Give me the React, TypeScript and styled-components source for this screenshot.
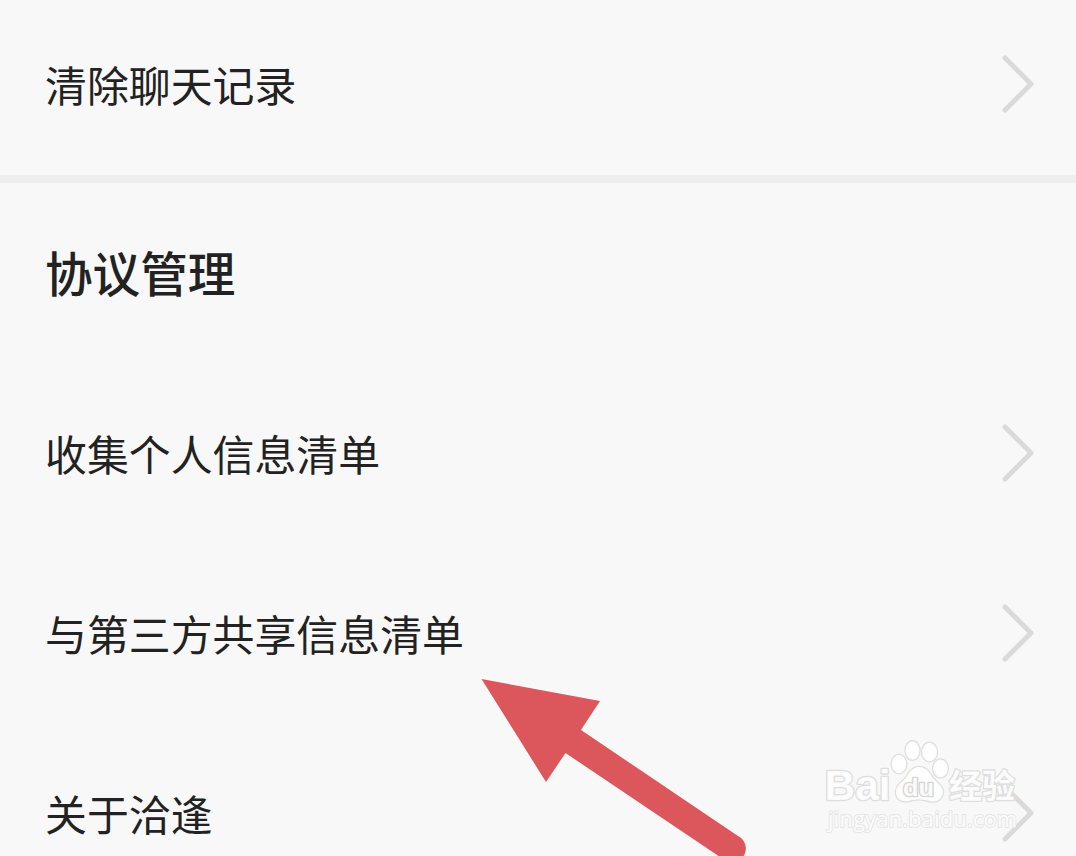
import React from 'react';
import styled, { createGlobalStyle } from 'styled-components';

const GlobalStyle = createGlobalStyle`
  * {
    box-sizing: border-box;
  }

  body {
    margin: 0;
    background: #f8f8f8;
    font-family: 'Noto Sans CJK SC', sans-serif;
  }
`;

const Page = styled.main`
  position: relative;
  display: flex;
  flex-direction: column;
  width: 1076px;
  height: 856px;
  overflow: hidden;
  background: #f8f8f8;
  color: #222;
`;

const Row = styled.div<{ $height?: number }>`
  display: flex;
  flex-shrink: 0;
  align-items: center;
  justify-content: space-between;
  height: ${props => props.$height || 180}px;
  padding: 0 40px 2px 45px;
`;

const FirstRow = styled(Row)`
  padding-bottom: 8px;
`;

const Label = styled.span`
  font-size: 41.9px;
  line-height: 60px;
  white-space: nowrap;
`;

const Divider = styled.div`
  flex-shrink: 0;
  height: 8px;
  background: #eeeeee;
`;

const SectionTitle = styled.h2`
  display: flex;
  flex-shrink: 0;
  align-items: center;
  height: 181px;
  margin: 0;
  padding: 0 45px 3px;
  font-size: 47.6px;
  font-weight: 500;
  line-height: 70px;
`;

const Arrow = styled.svg`
  position: absolute;
  left: 470px;
  top: 670px;
`;

const Watermark = styled.svg`
  position: absolute;
  left: 816px;
  top: 732px;
`;

const Brand = styled.text`
  font-family: 'Liberation Sans', 'Noto Sans CJK SC', sans-serif;
  font-weight: 700;
`;

const Address = styled.text`
  font-family: 'Open Sans', sans-serif;
  font-size: 21.5px;
  font-weight: 400;
`;

function Chevron() {
  return (
    <svg width="36" height="62" viewBox="0 0 36 62" fill="none">
      <path
        d="M5 5L31 31L5 57"
        stroke="#dadada"
        strokeWidth="5"
        strokeLinecap="round"
        strokeLinejoin="round"
      />
    </svg>
  );
}

function BaiduMark() {
  return (
    <Watermark width="216" height="112" viewBox="816 732 216 112">
      <g
        fill="#fff"
        fillOpacity="0.9"
        stroke="#dedede"
        strokeWidth="2.6"
        strokeLinejoin="round"
        paintOrder="stroke"
      >
        <Brand x="824.5" y="800" fontSize="42" textLength="66" lengthAdjust="spacingAndGlyphs">Bai</Brand>
        <ellipse cx="899" cy="764" rx="7.3" ry="9.3" strokeWidth="2.4" />
        <ellipse cx="912.5" cy="750.5" rx="7" ry="9.3" strokeWidth="2.4" />
        <ellipse cx="929.5" cy="752" rx="7.4" ry="9.3" strokeWidth="2.4" />
        <ellipse cx="940.5" cy="768.5" rx="7.4" ry="9" strokeWidth="2.4" />
        <path
          d="M919 767C911 767 909 774 904 780C899 784 896 787 896 792C896 800 902 802 909 801C915 799 923 799 929 801C937 803 943 799 943 791C942 785 937 783 933 778C929 772 927 767 919 767Z"
          strokeWidth="2.4"
        />
        <Brand x="903" y="796" fontSize="23" stroke="#d6d6d6" textLength="31" lengthAdjust="spacingAndGlyphs">du</Brand>
        <Brand x="949" y="798" fontSize="33" textLength="66">经验</Brand>
        <Address x="828" y="827" stroke="#e6e6e6" strokeWidth="2" textLength="189">jingyan.baidu.com</Address>
      </g>
    </Watermark>
  );
}

const AGREEMENTS = ['收集个人信息清单', '与第三方共享信息清单', '关于洽逢'];

function App() {
  return (
    <Page>
      <GlobalStyle />

      <FirstRow $height={175}>
        <Label>清除聊天记录</Label>
        <Chevron />
      </FirstRow>
      <Divider />

      <SectionTitle>协议管理</SectionTitle>
      {AGREEMENTS.map(item => (
        <Row key={item}>
          <Label>{item}</Label>
          <Chevron />
        </Row>
      ))}

      <Arrow width="290" height="186" viewBox="470 670 290 186">
        <path
          d="M481.5 679L600 701L581 730L738 836A12.5 12.5 0 0 1 726 861L565.5 753L546 782Z"
          fill="#dc575b"
        />
      </Arrow>
      <BaiduMark />
    </Page>
  );
}

export default App;
